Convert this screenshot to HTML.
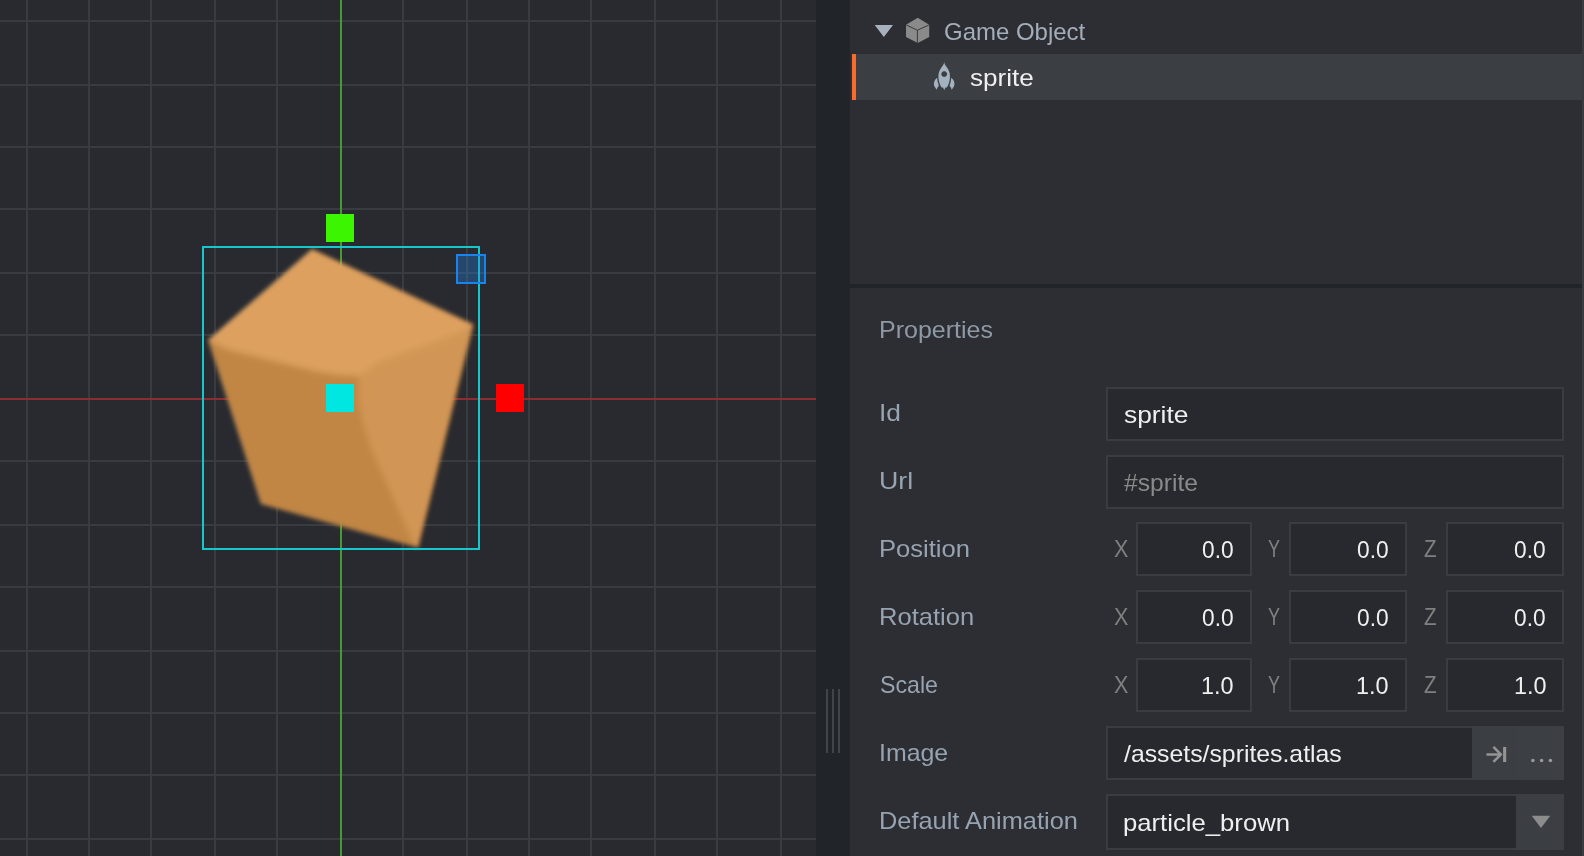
<!DOCTYPE html>
<html><head><meta charset="utf-8"><title>Defold</title>
<style>
html,body{margin:0;padding:0;background:#2c2e33;}
body{width:1584px;height:856px;overflow:hidden;position:relative;font-family:"Liberation Sans", sans-serif;}
.abs{position:absolute}
.t{position:absolute;font-family:"Liberation Sans", sans-serif;font-size:24px;line-height:28px;white-space:nowrap;transform-origin:0 50%;}
.f{position:absolute;box-sizing:border-box;background:#28292e;border:2px solid #3a3c42;}
</style></head>
<body>
<svg width="816" height="856" viewBox="0 0 816 856" style="position:absolute;left:0;top:0;display:block">
<defs><filter id="bl" x="-5%" y="-5%" width="110%" height="110%"><feGaussianBlur stdDeviation="2.1"/></filter><filter id="bl3" filterUnits="userSpaceOnUse" x="50" y="100" width="600" height="600"><feGaussianBlur stdDeviation="3.2"/></filter><filter id="bl2" x="-5%" y="-5%" width="110%" height="110%"><feGaussianBlur stdDeviation="0.45"/></filter></defs>
<rect width="816" height="856" fill="#292a2f"/>
<g fill="#383a3f" filter="url(#bl2)"><rect x="26" y="0" width="2" height="856"/><rect x="88" y="0" width="2" height="856"/><rect x="150" y="0" width="2" height="856"/><rect x="214" y="0" width="2" height="856"/><rect x="276" y="0" width="2" height="856"/><rect x="402" y="0" width="2" height="856"/><rect x="466" y="0" width="2" height="856"/><rect x="528" y="0" width="2" height="856"/><rect x="590" y="0" width="2" height="856"/><rect x="654" y="0" width="2" height="856"/><rect x="716" y="0" width="2" height="856"/><rect x="780" y="0" width="2" height="856"/><rect x="0" y="20" width="816" height="2"/><rect x="0" y="84" width="816" height="2"/><rect x="0" y="146" width="816" height="2"/><rect x="0" y="208" width="816" height="2"/><rect x="0" y="272" width="816" height="2"/><rect x="0" y="334" width="816" height="2"/><rect x="0" y="460" width="816" height="2"/><rect x="0" y="524" width="816" height="2"/><rect x="0" y="586" width="816" height="2"/><rect x="0" y="650" width="816" height="2"/><rect x="0" y="712" width="816" height="2"/><rect x="0" y="774" width="816" height="2"/><rect x="0" y="838" width="816" height="2"/></g>
<g filter="url(#bl2)"><rect x="0" y="398" width="816" height="2" fill="#8b2e32"/><rect x="340" y="0" width="2" height="856" fill="#449b31"/></g>
<mask id="sm" maskUnits="userSpaceOnUse" x="150" y="200" width="400" height="400"><polygon points="312,249 473.5,324.6 418.2,547.8 260.8,504 208,340" fill="#fff" filter="url(#bl)"/></mask>
<g mask="url(#sm)"><rect x="150" y="200" width="400" height="400" fill="#c18644"/><g filter="url(#bl3)"><polygon points="359,376 380,361 431.4,343 463.5,331.3 473.5,324.6 540,300 600,600 420,600 415.5,548 408,531 371.5,450 362,420 358.5,400" fill="#d19554"/><polygon points="100,150 600,150 540,300 473.5,324.6 463.5,331.3 431.4,343 380,361 359,376 343,375.5 318,372 275,361.5 227,349.5 208,340 140,320" fill="#dda05e"/></g></g>
<rect x="203" y="247" width="276" height="302" fill="none" stroke="#14c8cc" stroke-width="2" filter="url(#bl2)"/>
<rect x="326" y="214" width="28" height="28" fill="#3cf500"/>
<rect x="326" y="384" width="28" height="28" fill="#00e6e0"/>
<rect x="496" y="384" width="28" height="28" fill="#ff0000"/>
<rect x="457" y="255" width="28" height="28" fill="#1e86f0" fill-opacity="0.32" stroke="#1a84ee" stroke-width="2"/>
</svg>
<div class="abs" style="left:816px;top:0;width:34px;height:856px;background:#212429"></div>
<div class="abs" style="left:826px;top:689px;width:2px;height:64px;background:#414449"></div>
<div class="abs" style="left:832px;top:689px;width:2px;height:64px;background:#414449"></div>
<div class="abs" style="left:838px;top:689px;width:2px;height:64px;background:#414449"></div>
<div class="abs" style="left:850px;top:0;width:734px;height:284px;background:#2c2e33"></div>
<div class="abs" style="left:850px;top:284px;width:732px;height:4px;background:#212429"></div>
<div class="abs" style="left:850px;top:288px;width:734px;height:568px;background:#2c2e33"></div>
<div class="abs" style="left:1582px;top:0;width:2px;height:856px;background:#393b41"></div>
<!-- outline -->
<div class="abs" style="left:852px;top:54px;width:730px;height:46px;background:#3b3e43"></div>
<div class="abs" style="left:852px;top:54px;width:4px;height:46px;background:#fc6a2c"></div>
<svg class="abs" style="left:850px;top:0" width="140" height="100" viewBox="850 0 140 100">
<polygon points="874.7,25 893,25 883.85,37" fill="#a7b2be"/>
<g>
<polygon points="917.8,17.7 929.2,24.8 929.2,36.9 917.8,43.1 906,36.9 906,24.8" fill="#8a8a8a"/>
<path d="M906.3,25 L917.4,30.2 L928.9,25 M917.4,30.2 L917.4,42.8" stroke="#2f3136" stroke-width="0.9" fill="none"/>
</g>
<g fill="#a4b1bf">
<path d="M944.2,62 C944.5,64 945.2,65.3 946.3,66.6 C949.1,70 950.4,74 949.9,78.5 C949.5,82 948.3,85 946.9,87.5 L945.3,87.5 L944.2,90.2 L943.1,87.5 L941.5,87.5 C940.1,85 938.9,82 938.5,78.5 C938,74 939.3,70 942.1,66.6 C943.2,65.3 943.9,64 944.2,62 Z M944.2,71.2 a2.9,2.9 0 1 0 0.01,0 Z" fill-rule="evenodd"/>
<path d="M937.1,77.8 C934.3,80 933.2,83.5 934.5,86.6 L936.6,89.8 C937.1,88.2 937.9,86.8 938.9,85.8 C937.9,83.3 937.3,80.6 937.1,77.8 Z"/>
<path d="M951.3,77.8 C954.1,80 955.2,83.5 953.9,86.6 L951.8,89.8 C951.3,88.2 950.5,86.8 949.5,85.8 C950.5,83.3 951.1,80.6 951.3,77.8 Z"/>
</g>
</svg>
<!-- fields -->
<div class="f" style="left:1106px;top:387px;width:458px;height:54px"></div>
<div class="f" style="left:1106px;top:455px;width:458px;height:54px"></div>
<div class="f" style="left:1136px;top:522px;width:116px;height:54px"></div>
<div class="f" style="left:1289px;top:522px;width:118px;height:54px"></div>
<div class="f" style="left:1446px;top:522px;width:118px;height:54px"></div>
<div class="f" style="left:1136px;top:590px;width:116px;height:54px"></div>
<div class="f" style="left:1289px;top:590px;width:118px;height:54px"></div>
<div class="f" style="left:1446px;top:590px;width:118px;height:54px"></div>
<div class="f" style="left:1136px;top:658px;width:116px;height:54px"></div>
<div class="f" style="left:1289px;top:658px;width:118px;height:54px"></div>
<div class="f" style="left:1446px;top:658px;width:118px;height:54px"></div>
<div class="f" style="left:1106px;top:726px;width:458px;height:54px"></div>
<div class="f" style="left:1106px;top:794px;width:458px;height:56px"></div>
<!-- image buttons -->
<div class="abs" style="left:1472px;top:727px;width:92px;height:53px;background:#3b3e43"></div>
<div class="abs" style="left:1518px;top:726px;width:46px;height:54px;background:#3c3f44"></div>
<svg class="abs" style="left:1472px;top:726px" width="92" height="54" viewBox="1472 726 92 54">
<g stroke="#949494" stroke-width="2.5" fill="none" stroke-linecap="butt" stroke-linejoin="miter">
<path d="M1486.5,754.4 L1500.6,754.4 M1493.4,746.9 L1500.9,754.4 L1493.4,761.9"/>
</g>
<rect x="1503.1" y="747" width="3.1" height="15" fill="#949494"/>
<g fill="#9a9a9a"><circle cx="1532.9" cy="760.5" r="1.75"/><circle cx="1541.6" cy="760.5" r="1.75"/><circle cx="1550.4" cy="760.5" r="1.75"/></g>
</svg>
<!-- combo button -->
<div class="abs" style="left:1516px;top:794px;width:48px;height:56px;background:#3b3e43"></div>
<svg class="abs" style="left:1516px;top:794px" width="48" height="55" viewBox="1516 794 48 55">
<polygon points="1531.7,815.8 1550.3,815.8 1541,827.9" fill="#8c8c8c"/>
</svg>
<!-- text -->
<span id="t_go" class="t" style="left:944.00px;top:18.00px;color:#a3aeba;transform:scaleX(0.9987)">Game Object</span>
<span id="t_spr" class="t" style="left:969.50px;top:64.00px;color:#efefef;transform:scaleX(1.0868)">sprite</span>
<span id="t_prop" class="t" style="left:879.00px;top:316.00px;color:#8e99a5;transform:scaleX(1.0410)">Properties</span>
<span id="t_id" class="t" style="left:879.00px;top:399.00px;color:#97a3b0;transform:scaleX(1.0973)">Id</span>
<span id="t_idv" class="t" style="left:1124.00px;top:401.00px;color:#efefef;transform:scaleX(1.0972)">sprite</span>
<span id="t_url" class="t" style="left:879.00px;top:467.00px;color:#97a3b0;transform:scaleX(1.1148)">Url</span>
<span id="t_urlv" class="t" style="left:1124.00px;top:469.00px;color:#8a8a8a;transform:scaleX(1.0278)">#sprite</span>
<span id="t_pos" class="t" style="left:879.00px;top:535.00px;color:#97a3b0;transform:scaleX(1.0652)">Position</span>
<span id="t_rot" class="t" style="left:879.00px;top:603.00px;color:#97a3b0;transform:scaleX(1.0643)">Rotation</span>
<span id="t_scl" class="t" style="left:880.00px;top:671.00px;color:#97a3b0;transform:scaleX(0.9655)">Scale</span>
<span id="t_img" class="t" style="left:879.00px;top:739.00px;color:#97a3b0;transform:scaleX(1.0376)">Image</span>
<span id="t_imgv" class="t" style="left:1124.00px;top:740.00px;color:#efefef;transform:scaleX(1.0332)">/assets/sprites.atlas</span>
<span id="t_da" class="t" style="left:879.00px;top:807.00px;color:#97a3b0;transform:scaleX(1.0571)">Default Animation</span>
<span id="t_dav" class="t" style="left:1123.00px;top:809.00px;color:#efefef;transform:scaleX(1.0698)">particle_brown</span>
<span id="t_x0" class="t" style="left:1113.50px;top:535.00px;color:#808080;transform:scaleX(0.8976)">X</span>
<span id="t_y0" class="t" style="left:1268.00px;top:535.00px;color:#808080;transform:scaleX(0.7500)">Y</span>
<span id="t_z0" class="t" style="left:1424.00px;top:535.00px;color:#808080;transform:scaleX(0.8571)">Z</span>
<span id="t_xv0" class="t" style="left:1201.50px;top:536.00px;color:#efefef;transform:scaleX(0.9471)">0.0</span>
<span id="t_yv0" class="t" style="left:1356.50px;top:536.00px;color:#efefef;transform:scaleX(0.9471)">0.0</span>
<span id="t_zv0" class="t" style="left:1514.00px;top:536.00px;color:#efefef;transform:scaleX(0.9471)">0.0</span>
<span id="t_x1" class="t" style="left:1113.50px;top:603.00px;color:#808080;transform:scaleX(0.8976)">X</span>
<span id="t_y1" class="t" style="left:1268.00px;top:603.00px;color:#808080;transform:scaleX(0.7500)">Y</span>
<span id="t_z1" class="t" style="left:1424.00px;top:603.00px;color:#808080;transform:scaleX(0.8571)">Z</span>
<span id="t_xv1" class="t" style="left:1201.50px;top:604.00px;color:#efefef;transform:scaleX(0.9471)">0.0</span>
<span id="t_yv1" class="t" style="left:1356.50px;top:604.00px;color:#efefef;transform:scaleX(0.9471)">0.0</span>
<span id="t_zv1" class="t" style="left:1514.00px;top:604.00px;color:#efefef;transform:scaleX(0.9471)">0.0</span>
<span id="t_x2" class="t" style="left:1113.50px;top:671.00px;color:#808080;transform:scaleX(0.8976)">X</span>
<span id="t_y2" class="t" style="left:1268.00px;top:671.00px;color:#808080;transform:scaleX(0.7500)">Y</span>
<span id="t_z2" class="t" style="left:1424.00px;top:671.00px;color:#808080;transform:scaleX(0.8571)">Z</span>
<span id="t_xv2" class="t" style="left:1201.00px;top:672.00px;color:#efefef;transform:scaleX(0.9767)">1.0</span>
<span id="t_yv2" class="t" style="left:1356.00px;top:672.00px;color:#efefef;transform:scaleX(0.9767)">1.0</span>
<span id="t_zv2" class="t" style="left:1513.50px;top:672.00px;color:#efefef;transform:scaleX(0.9767)">1.0</span>
</body></html>
